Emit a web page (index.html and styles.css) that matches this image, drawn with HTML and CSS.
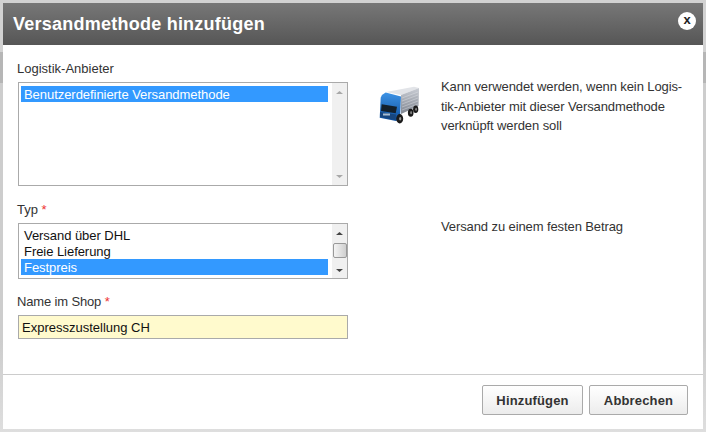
FILE: index.html
```html
<!DOCTYPE html>
<html lang="de">
<head>
<meta charset="utf-8">
<title>Versandmethode hinzufügen</title>
<link rel="stylesheet" href="styles.css">
</head>
<body>
<div class="modal">
  <header class="head">
    <h1 class="title">Versandmethode hinzufügen</h1>
    <span class="close">x</span>
  </header>
  <form class="form">
    <div class="left">
      <label class="label">Logistik-Anbieter</label>
      <div class="list list-tall">
        <div class="options">
          <div class="opt sel">Benutzerdefinierte Versandmethode</div>
        </div>
        <div class="sb sb-idle">
          <svg class="arr" width="7" height="3" viewBox="0 0 7 3"><path d="M3.500 0L7 3H0z" fill="#a8a8a8"/></svg>
          <svg class="arr" width="7" height="3" viewBox="0 0 7 3"><path d="M0 0H7L3.500 3z" fill="#a8a8a8"/></svg>
        </div>
      </div>
      <label class="label label-typ">Typ <span class="req">*</span></label>
      <div class="list list-short">
        <div class="options">
          <div class="opt">Versand über DHL</div>
          <div class="opt">Freie Lieferung</div>
          <div class="opt sel">Festpreis</div>
        </div>
        <div class="sb">
          <svg class="arr" width="7" height="3" viewBox="0 0 7 3"><path d="M3.500 0L7 3H0z" fill="#444"/></svg>
          <div class="thumb"></div>
          <svg class="arr" width="7" height="3" viewBox="0 0 7 3"><path d="M0 0H7L3.500 3z" fill="#444"/></svg>
        </div>
      </div>
      <label class="label label-name">Name im Shop <span class="req">*</span></label>
      <div class="input">Expresszustellung CH</div>
    </div>
    <div class="right">
      <div class="info">
        <svg class="truck" width="44" height="40" viewBox="0 0 44 40">
          <defs>
            <linearGradient id="side" x1="0" y1="0" x2="0" y2="1"><stop offset="0" stop-color="#c9cdd4"/><stop offset="1" stop-color="#7f8590"/></linearGradient>
            <linearGradient id="cab" x1="0" y1="0" x2="0" y2="1"><stop offset="0" stop-color="#3d93e6"/><stop offset="1" stop-color="#0e4f9e"/></linearGradient>
          </defs>
          <path d="M9 8L37 2.700L42 4L24 11Z" fill="#e2e4e8"/>
          <path d="M24 11L42 4L41.500 22L24 30Z" fill="url(#side)"/>
          <path d="M25 14L41 8M25 17L41 11M25 20L41 14M25 23L41 17M25 26L41 20" stroke="#eceef1" stroke-width=".6" opacity=".6"/>
          <path d="M3.700 13.700Q5 10 8.700 8.500L24 12.500L23 35L19 37L2.700 33.700Z" fill="url(#cab)"/>
          <path d="M4.700 20.300L20 22.700L18.700 29.300L4 27Z" fill="#13202c"/>
          <path d="M3 28L19 30.500L18.500 36L3 33Z" fill="#17467f"/>
          <rect x="6" y="29.500" width="7" height="2" fill="#a9bdd2"/>
          <ellipse cx="22.700" cy="34.700" rx="3.500" ry="4.700" fill="#1b1b1b"/>
          <ellipse cx="23.200" cy="34.700" rx="1.100" ry="1.800" fill="#999"/>
          <ellipse cx="33.700" cy="28.700" rx="2.800" ry="4" fill="#1b1b1b"/>
          <ellipse cx="34.100" cy="28.700" rx=".9" ry="1.600" fill="#888"/>
          <ellipse cx="38.700" cy="25.300" rx="2.600" ry="3.800" fill="#1b1b1b"/>
          <ellipse cx="39.100" cy="25.300" rx=".9" ry="1.500" fill="#888"/>
        </svg>
        <p class="desc">Kann verwendet werden, wenn kein Logis-<br>tik-Anbieter mit dieser Versandmethode<br>verknüpft werden soll</p>
      </div>
      <p class="desc desc-type">Versand zu einem festen Betrag</p>
    </div>
  </form>
  <footer class="foot">
    <button class="btn" type="button">Hinzufügen</button>
    <button class="btn" type="button">Abbrechen</button>
  </footer>
</div>
</body>
</html>
```
FILE: styles.css
```css
html, body { margin: 0; height: 100%; }
body {
  background:
    linear-gradient(#d2d2d2 0, #d2d2d2 52px, #b6b6b6 52px, #b6b6b6 83px, #cdcdcd 83px, #cdcdcd 340px, #dedede 432px);
  overflow: hidden;
  font-family: "Liberation Sans", Arial, sans-serif;
  padding: 3px;
  box-sizing: border-box;
}
.modal {
  width: 700px;
  height: 426px;
  background: #fff;
  display: flex;
  flex-direction: column;
}
.head {
  height: 42px;
  flex: none;
  background: linear-gradient(#777, #565656);
  display: flex;
  align-items: center;
  justify-content: space-between;
  padding: 0 7px 0 10px;
}
.title {
  margin: 0;
  font-size: 18px;
  font-weight: bold;
  color: #fff;
  letter-spacing: 0.24px;
}
.close {
  width: 18px;
  height: 18px;
  border-radius: 50%;
  background: #fff;
  color: #222;
  font-size: 13px;
  font-weight: bold;
  line-height: 16px;
  text-align: center;
  margin-top: -6px;
}
.form {
  flex: 1;
  display: flex;
  padding: 15px 0 0 15px;
  border-bottom: 1px solid #ccc;
}
.left { width: 330px; }
.label {
  display: block;
  font-size: 13px;
  line-height: 18px;
  color: #333;
  margin-left: -1px;
}
.req { color: #e33; }
.label-typ { margin-top: 15px; }
.label-name { margin-top: 14px; letter-spacing: -0.15px; }
.list {
  display: flex;
  border: 1px solid #aaa;
  box-sizing: border-box;
  background: #fff;
}
.list-tall { height: 104px; margin-top: 4px; }
.list-short { height: 56px; margin-top: 4px; }
.options { flex: 1; padding: 3px 4px 0 2px; overflow: hidden; }
.opt {
  height: 16px;
  line-height: 18px;
  font-size: 13px;
  letter-spacing: -0.05px;
  padding-left: 3px;
  color: #111;
  overflow: hidden;
}
.sel { background: #3399ff; color: #fff; }
.sb {
  width: 15px;
  background: #f0f0f0;
  display: flex;
  flex-direction: column;
  align-items: center;
  justify-content: space-between;
  padding: 8px 0 6px;
  box-sizing: border-box;
}
.sb-idle { padding-bottom: 7px; }
.arr { display: block; flex: none; }
.thumb {
  width: 14px;
  height: 15px;
  margin-bottom: 4px;
  box-sizing: border-box;
  border: 1px solid #999;
  border-radius: 2px;
  background: linear-gradient(90deg, #f4f4f4, #cfcfcf);
}
.input {
  margin-top: 4px;
  height: 24px;
  line-height: 23px;
  box-sizing: border-box;
  border: 1px solid #aaa;
  background: #fffacd;
  font-size: 13px;
  padding-left: 3px;
  color: #111;
}
.right { flex: 1; padding: 24px 0 0 29px; }
.info { display: flex; align-items: flex-start; }
.truck { flex: none; }
.desc {
  margin: 0;
  font-size: 13px;
  line-height: 19.5px;
  letter-spacing: -0.1px;
  color: #333;
}
.info .desc { margin: -7px 0 -20px 20px; }
.desc-type { margin: 93px 0 0 64px; }
.foot {
  height: 54px;
  flex: none;
  box-sizing: border-box;
  display: flex;
  justify-content: flex-end;
  gap: 6px;
  padding: 10px 15px 0 0;
}
.btn {
  height: 30px;
  width: 101px;
  padding: 0;
  border: 1px solid #aaa;
  border-radius: 2px;
  background: linear-gradient(#fff, #ececec);
  font: bold 13px "Liberation Sans", Arial, sans-serif;
  letter-spacing: 0.15px;
  color: #333;
}
.btn + .btn { width: 99px; }
```
